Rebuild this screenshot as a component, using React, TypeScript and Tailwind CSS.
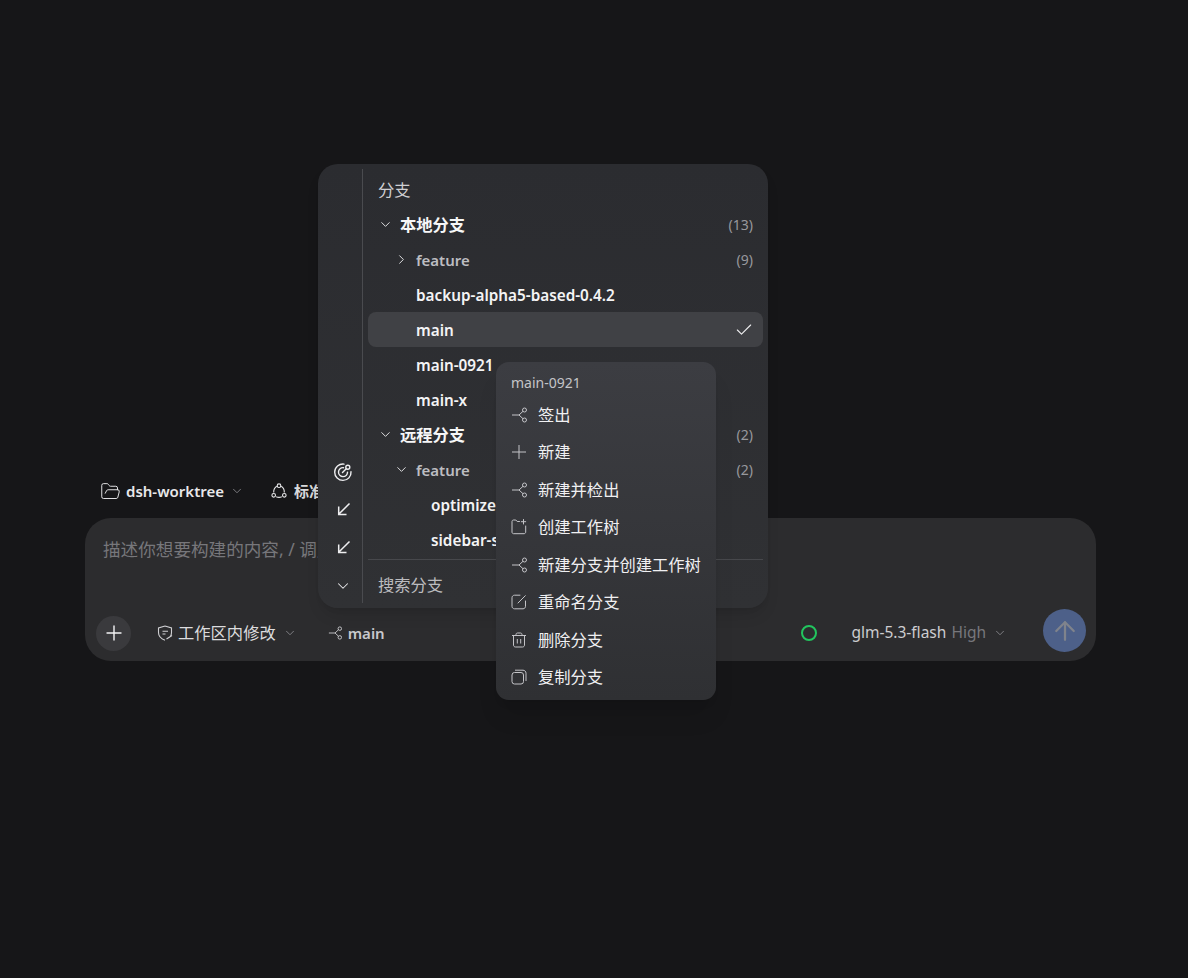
import React from "react";
import { ChevronDown, ChevronRight, Check, ArrowUp, Plus, FolderOpen } from "lucide-react";

const font = "font-['Noto_Sans','Noto_Sans_CJK_SC',sans-serif]";

function BranchIcon({ className = "" }: { className?: string }) {
  return (
    <svg viewBox="0 0 16 16" fill="none" stroke="currentColor" strokeWidth="1" className={className}>
      <path d="M1 8H8L12 4.300M8 8L12 11.700" />
      <circle cx="13.500" cy="3" r="2" />
      <circle cx="13.500" cy="13" r="2" />
    </svg>
  );
}

function ShieldIcon({ className = "" }: { className?: string }) {
  return (
    <svg viewBox="0 0 16 16" fill="none" stroke="currentColor" strokeWidth="1.100" className={className}>
      <path d="M8 1L14.500 3V7.500C14.500 8.800 14.200 10 13.600 11M8 15.300C4.500 14 1.500 11.500 1.500 7.500V3L8 1" />
      <path d="M5.500 6.300H11M5.500 9H8.500M9.500 14L15 10.500" />
    </svg>
  );
}

function ModeIcon({ className = "" }: { className?: string }) {
  return (
    <svg viewBox="0 0 16 16" fill="none" stroke="currentColor" strokeWidth="1.100" className={className}>
      <circle cx="8" cy="2.700" r="1.800" />
      <circle cx="2.700" cy="12.300" r="1.800" />
      <circle cx="13.300" cy="12.300" r="1.800" />
      <path d="M5.800 3.200C3.800 4.300 2.600 6.500 2.700 9.400M10.200 3.200C12.200 4.300 13.400 6.500 13.300 9.400M5.200 13.800C7 14.500 9 14.500 10.800 13.800" />
    </svg>
  );
}

function RadarIcon({ className = "" }: { className?: string }) {
  return (
    <svg viewBox="0 0 20 20" fill="none" stroke="currentColor" strokeWidth="1.400" strokeLinecap="round" className={className}>
      <path d="M11 2.100C6.100 1.500 1.700 5.200 1.700 10.200C1.700 14.800 5.400 18.400 10 18.400C14.700 18.400 18.400 14.500 18 9.800" />
      <path d="M10.500 5.700C7.900 5.400 5.500 7.400 5.500 10.100C5.500 12.600 7.500 14.600 10 14.600C12.400 14.600 14.400 12.800 14.500 10.300" />
      <path d="M9.500 10.500L13 7" />
      <circle cx="14.800" cy="5.200" r="2" />
    </svg>
  );
}

function ArrowIcon({ className = "" }: { className?: string }) {
  return (
    <svg viewBox="0 0 14 14" fill="none" stroke="currentColor" strokeWidth="1.500" className={className}>
      <path d="M12.500 1.500L1.700 12.300M1.700 4.500V12.500H9.500" />
    </svg>
  );
}

function WorktreeIcon({ className = "" }: { className?: string }) {
  return (
    <svg viewBox="0 0 16 16" fill="none" stroke="currentColor" strokeWidth="1" strokeLinecap="round" className={className}>
      <path d="M8.500 2.500H6.200L4.800 1H2.500C1.700 1 1 1.700 1 2.500V13C1 14 1.700 14.700 2.500 14.700H13C14 14.700 14.700 14 14.700 13V7" />
      <path d="M12.500 0.500V5M10.300 2.700H14.700" />
    </svg>
  );
}

function RenameIcon({ className = "" }: { className?: string }) {
  return (
    <svg viewBox="0 0 16 16" fill="none" stroke="currentColor" strokeWidth="1" strokeLinecap="round" className={className}>
      <path d="M9 1.200H3.500C2.100 1.200 1 2.300 1 3.700V12.300C1 13.700 2.100 14.800 3.500 14.800H12C13.400 14.800 14.500 13.700 14.500 12.300V7" />
      <path d="M7 9L14.300 1.700" />
    </svg>
  );
}

function PlusThin({ className = "" }: { className?: string }) {
  return (
    <svg viewBox="0 0 16 16" fill="none" stroke="currentColor" strokeWidth="1" className={className}>
      <path d="M8 1V15M1 8H15" />
    </svg>
  );
}

function TrashIcon({ className = "" }: { className?: string }) {
  return (
    <svg viewBox="0 0 16 16" fill="none" stroke="currentColor" strokeWidth="1" className={className}>
      <path d="M1 3.500H15M5 3.500V2.500C5 1.500 5.700 1 6.500 1H9.500C10.300 1 11 1.500 11 2.500V3.500" />
      <path d="M2.500 3.500V13C2.500 14.200 3.300 15 4.500 15H11.500C12.700 15 13.500 14.200 13.500 13V3.500" />
      <path d="M6.300 7V11.500M9.700 7V11.500" />
    </svg>
  );
}

function CopyIcon({ className = "" }: { className?: string }) {
  return (
    <svg viewBox="0 0 16 16" fill="none" stroke="currentColor" strokeWidth="1" className={className}>
      <rect x="1" y="3.500" width="11.500" height="11.500" rx="2.500" />
      <path d="M4 1.200H12C13.700 1.200 15 2.500 15 4.200V12" />
    </svg>
  );
}

function Row({ indent, name, chevron, count, dim, selected, large }: {
  indent: string; name: string; chevron?: "down" | "right"; count?: string; dim?: boolean; selected?: boolean; large?: boolean;
}) {
  const nameClass = large
    ? "text-[16.300px] text-[#f6f6f7]"
    : dim
      ? "text-[15px] text-[#bdbdc1]"
      : "text-[15.300px] text-[#f4f4f5]";
  return (
    <div className={`flex h-[35px] shrink-0 items-center rounded-lg pr-[10px] ${selected ? "bg-[#404145]" : ""}`}>
      <div className={`flex items-center ${indent}`}>
        {chevron === "down" && <ChevronDown className="mr-[7px] h-[15px] w-[15px] text-[#e8e8ea]" strokeWidth={1.500} />}
        {chevron === "right" && <ChevronRight className="mr-[7px] h-[15px] w-[15px] text-[#e8e8ea]" strokeWidth={1.500} />}
        <span className={`whitespace-nowrap pt-[2px] font-semibold ${nameClass}`}>{name}</span>
      </div>
      <div className="flex-1" />
      {count && <span className="text-sm text-[#98989d]">{count}</span>}
      {selected && <Check className="mr-[-1px] h-5 w-5 text-[#eeeef0]" strokeWidth={1.300} />}
    </div>
  );
}

const menuItems: { label: string; icon: React.ReactNode }[] = [
  { label: "签出", icon: <BranchIcon className="h-4 w-4" /> },
  { label: "新建", icon: <PlusThin className="h-4 w-4" /> },
  { label: "新建并检出", icon: <BranchIcon className="h-4 w-4" /> },
  { label: "创建工作树", icon: <WorktreeIcon className="h-4 w-4" /> },
  { label: "新建分支并创建工作树", icon: <BranchIcon className="h-4 w-4" /> },
  { label: "重命名分支", icon: <RenameIcon className="h-4 w-4" /> },
  { label: "删除分支", icon: <TrashIcon className="h-4 w-4" /> },
  { label: "复制分支", icon: <CopyIcon className="h-4 w-4" /> },
];

export default function App() {
  return (
    <div className={`${font} relative h-[978px] overflow-hidden bg-[#161618] pl-[85px] pt-[480px]`}>
      {/* top selectors */}
      <div className="flex h-[22px] items-center pl-[15px] text-[#e8e8ea]">
        <FolderOpen className="h-[21px] w-[21px]" strokeWidth={1.100} />
        <span className="ml-[5px] text-[15px] font-semibold text-[#e8e8ea]">dsh-worktree</span>
        <ChevronDown className="ml-[6px] h-[14px] w-[14px] text-[#88888d]" strokeWidth={1.500} />
        <ModeIcon className="ml-[27px] h-4 w-4" />
        <span className="ml-[7px] text-[15px] font-semibold text-[#d8d8da]">标准</span>
      </div>

      {/* composer */}
      <div className="mt-[16px] flex h-[143px] w-[1011px] flex-col rounded-[26px] bg-[#2c2c2e] pb-[9px] pl-[11px] pr-[10px] pt-[19px]">
        <div className="pl-[7px] text-[17.600px] leading-6 text-[#77777b]">描述你想要构建的内容, / 调用命令</div>
        <div className="flex-1" />
        <div className="flex h-[43px] items-end">
          <div className="flex h-[38px] flex-1 items-center">
            <div className="flex h-[35px] w-[35px] items-center justify-center rounded-full bg-[#3a3a3d]">
              <Plus className="h-6 w-6 text-[#f4f4f5]" strokeWidth={1.400} />
            </div>
            <ShieldIcon className="ml-[26px] h-4 w-4 text-[#d0d0d3]" />
            <span className="ml-[5px] text-[16.300px] text-[#dcdcde]">工作区内修改</span>
            <ChevronDown className="ml-[7px] h-[14px] w-[14px] text-[#88888d]" strokeWidth={1.500} />
            <BranchIcon className="ml-[31px] h-[14px] w-[14px] text-[#d0d0d3]" />
            <span className="ml-[6px] text-[15px] font-semibold text-[#c8c8cb]">main</span>
            <div className="flex-1" />
            <div className="h-4 w-4 rounded-full border-[2.500px] border-[#22c55e]" />
            <span className="ml-[34px] text-[15.500px] text-[#cdcdd0]">glm-5.3-flash</span>
            <span className="ml-[5px] text-[15.500px] text-[#77777c]">High</span>
            <ChevronDown className="ml-[7px] h-[14px] w-[14px] text-[#88888d]" strokeWidth={1.500} />
            <div className="w-[36px]" />
          </div>
          <div className="flex h-[43px] w-[43px] shrink-0 items-center justify-center rounded-full bg-[#4d6089]">
            <ArrowUp className="h-[30px] w-[30px] text-[#7f838c]" strokeWidth={1.800} />
          </div>
        </div>
      </div>

      {/* branch panel */}
      <div className="absolute left-[318px] top-[164px] flex h-[444px] w-[450px] rounded-[20px] bg-gradient-to-b from-[#2b2c30] to-[#303134] p-[5px] shadow-lg">
        <div className="flex w-[40px] flex-col items-center border-r border-[#4a4b4f] pb-[9px] pl-[1px]">
          <div className="flex-1" />
          <RadarIcon className="mb-[20px] h-5 w-5 text-[#eeeef0]" />
          <ArrowIcon className="mb-[24px] ml-[2px] h-[14px] w-[14px] text-[#eeeef0]" />
          <ArrowIcon className="mb-[23px] ml-[2px] h-[14px] w-[14px] text-[#eeeef0]" />
          <ChevronDown className="mb-[-1px] h-[18px] w-[18px] text-[#e8e8ea]" strokeWidth={1.400} />
        </div>
        <div className="flex min-w-0 flex-1 flex-col pl-[5px] pt-[3px]">
          <div className="flex h-[35px] shrink-0 items-center pl-[10px] pt-[2px] text-[16.300px] text-[#cfcfd2]">分支</div>
          <Row indent="pl-[10px]" name="本地分支" chevron="down" count="(13)" large />
          <Row indent="pl-[26px]" name="feature" chevron="right" count="(9)" dim />
          <Row indent="pl-[48px]" name="backup-alpha5-based-0.4.2" />
          <Row indent="pl-[48px]" name="main" selected />
          <Row indent="pl-[48px]" name="main-0921" />
          <Row indent="pl-[48px]" name="main-x" />
          <Row indent="pl-[10px]" name="远程分支" chevron="down" count="(2)" large />
          <Row indent="pl-[26px]" name="feature" chevron="down" count="(2)" dim />
          <Row indent="pl-[63px]" name="optimize-sidebar" />
          <Row indent="pl-[63px]" name="sidebar-style" />
          <div className="mt-[1.500px] border-t border-[#47484c]" />
          <div className="flex flex-1 items-center pl-[10px] pt-[7px] text-[16.300px] text-[#bcbcbf]">搜索分支</div>
        </div>
      </div>

      {/* context menu */}
      <div className="absolute left-[496px] top-[362px] h-[338px] w-[220px] rounded-[13px] bg-gradient-to-b from-[#3c3d42] to-[#2f3033] px-[15px] pt-[11px] shadow-xl">
        <div className="flex h-[19px] items-center text-sm text-[#c4c4c8]">main-0921</div>
        <div className="mt-[4.200px] flex flex-col">
          {menuItems.map((item) => (
            <div key={item.label} className="flex h-[37.500px] items-center">
              <span className="flex w-4 shrink-0 text-[#c4c4c8]">{item.icon}</span>
              <span className="ml-[11px] whitespace-nowrap text-[16.300px] text-[#f0f0f2]">{item.label}</span>
            </div>
          ))}
        </div>
      </div>
    </div>
  );
}
